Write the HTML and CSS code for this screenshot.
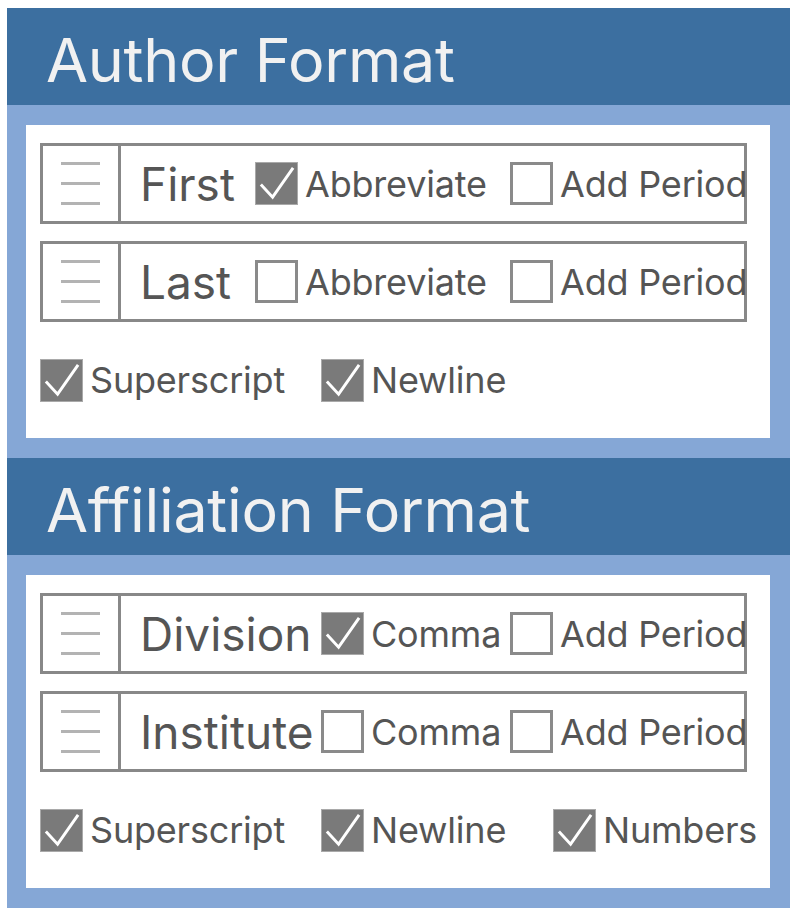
FILE: index.html
```html
<!DOCTYPE html>
<html>
<head>
<meta charset="utf-8">
<link rel="stylesheet" href="styles.css">
</head>
<body>
<div class="panel">
  <section class="section author">
    <h1 class="section-title">Author Format</h1>
    <div class="section-body">
      <div class="card">
        <div class="row">
          <div class="handle"><span></span><span></span><span></span></div>
          <div class="label">First</div>
          <label class="opt"><span class="cb checked"><svg viewBox="0 0 42 42"><path d="M5 22 L17 35 L38 5"/></svg></span>Abbreviate</label>
          <label class="opt"><span class="cb"></span>Add Period</label>
        </div>
        <div class="row">
          <div class="handle"><span></span><span></span><span></span></div>
          <div class="label">Last</div>
          <label class="opt"><span class="cb"></span>Abbreviate</label>
          <label class="opt"><span class="cb"></span>Add Period</label>
        </div>
        <div class="options">
          <label class="opt"><span class="cb checked"><svg viewBox="0 0 42 42"><path d="M5 22 L17 35 L38 5"/></svg></span>Superscript</label>
          <label class="opt"><span class="cb checked"><svg viewBox="0 0 42 42"><path d="M5 22 L17 35 L38 5"/></svg></span>Newline</label>
        </div>
      </div>
    </div>
  </section>
  <section class="section affiliation">
    <h1 class="section-title">Affiliation Format</h1>
    <div class="section-body">
      <div class="card">
        <div class="row">
          <div class="handle"><span></span><span></span><span></span></div>
          <div class="label">Division</div>
          <label class="opt"><span class="cb checked"><svg viewBox="0 0 42 42"><path d="M5 22 L17 35 L38 5"/></svg></span>Comma</label>
          <label class="opt"><span class="cb"></span>Add Period</label>
        </div>
        <div class="row">
          <div class="handle"><span></span><span></span><span></span></div>
          <div class="label">Institute</div>
          <label class="opt"><span class="cb"></span>Comma</label>
          <label class="opt"><span class="cb"></span>Add Period</label>
        </div>
        <div class="options">
          <label class="opt"><span class="cb checked"><svg viewBox="0 0 42 42"><path d="M5 22 L17 35 L38 5"/></svg></span>Superscript</label>
          <label class="opt"><span class="cb checked"><svg viewBox="0 0 42 42"><path d="M5 22 L17 35 L38 5"/></svg></span>Newline</label>
          <label class="opt"><span class="cb checked"><svg viewBox="0 0 42 42"><path d="M5 22 L17 35 L38 5"/></svg></span>Numbers</label>
        </div>
      </div>
    </div>
  </section>
</div>
</body>
</html>
```
FILE: styles.css
```css
* { box-sizing: border-box; }
body {
  margin: 0;
  background: #fff;
  font-family: Inter, "Noto Sans", "Liberation Sans", sans-serif;
  color: #555;
}
.panel {
  width: 783px;
  margin: 8px 0 0 7px;
}
.section-title {
  margin: 0;
  height: 97px;
  background: #3c6fa0;
  color: #f1f1f1;
  font-weight: 400;
  font-size: 61px;
  line-height: 97px;
  padding: 4px 0 0 39px;
  letter-spacing: -0.3px;
}
.section-body {
  background: #85a7d6;
  padding: 20px 20px 20px 19px;
}
.card {
  background: #fff;
  height: 313px;
  padding: 18px 23px 0 14px;
}
.row {
  display: grid;
  grid-template-columns: 78px var(--label-w) 1fr 234px;
  align-items: center;
  height: 81px;
  border: 3px solid #888;
  margin-bottom: 17px;
}
.author .row { --label-w: 134px; }
.affiliation .row { --label-w: 200px; }
.handle {
  height: 100%;
  border-right: 3px solid #888;
  display: flex;
  flex-direction: column;
  justify-content: center;
  gap: 17px;
  padding-left: 18px;
}
.handle span {
  display: block;
  width: 39px;
  height: 3px;
  background: #b3b3b3;
}
.label {
  padding-left: 19px;
  font-size: 46px;
  white-space: nowrap;
  color: #555;
}
.opt {
  display: flex;
  align-items: center;
  gap: 7px;
  font-size: 36px;
  letter-spacing: -0.2px;
  white-space: nowrap;
  color: #555;
}
.cb {
  flex: none;
  width: 43px;
  height: 43px;
  border: 3px solid #8a8a8a;
  background: #fff;
  display: block;
}
.cb.checked {
  background: #7a7a7a;
  border: 1px solid #a9a9a9;
}
.cb svg {
  display: block;
  width: 41px;
  height: 41px;
  fill: none;
  stroke: #fff;
  stroke-width: 3;
}
.options {
  display: grid;
  grid-template-columns: 281px 232px auto;
  align-items: center;
  margin-top: 36px;
}
```
